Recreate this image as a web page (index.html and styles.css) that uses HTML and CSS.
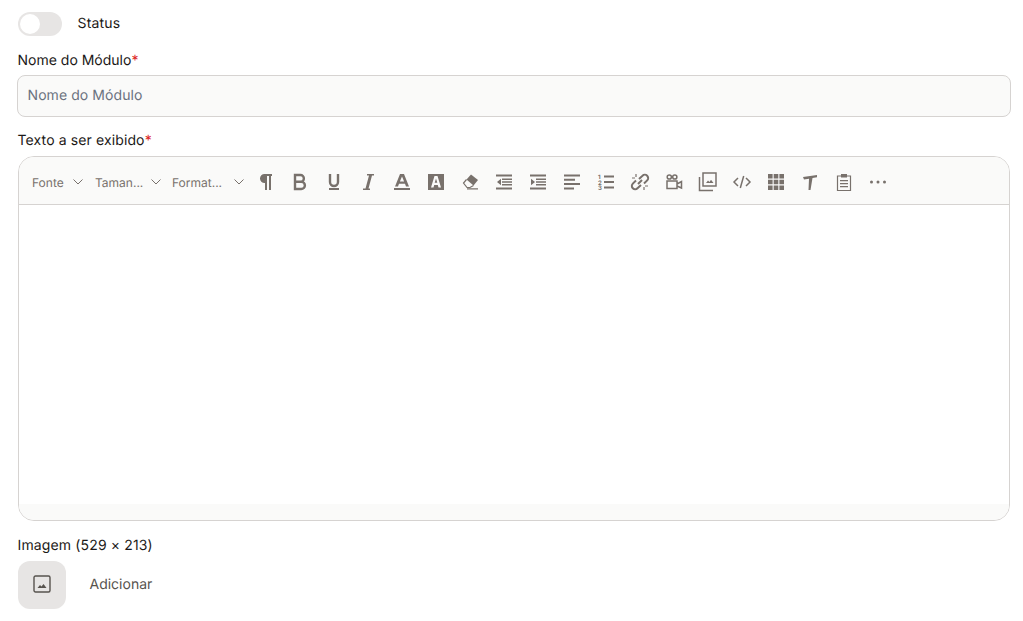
FILE: index.html
```html
<!DOCTYPE html>
<html>
<head>
	<meta charset="utf-8">
	<title>Módulo</title>
	<link rel="stylesheet" href="styles.css">
</head>
<body>
	<form class="form">
		<div class="status">
			<span class="toggle"><span class="knob"></span></span>
			<span class="status-text">Status</span>
		</div>

		<label class="label label-name">Nome do Módulo<span class="req">*</span></label>
		<div class="input"><span class="placeholder">Nome do Módulo</span></div>

		<label class="label label-text">Texto a ser exibido<span class="req">*</span></label>
		<div class="editor">
			<div class="toolbar">
				<div class="select sel-font"><span>Fonte</span><svg class="chev" viewBox="0 0 10 6"><path d="M.5.5 5 5 9.500.5"/></svg></div>
				<div class="select sel-size"><span>Taman...</span><svg class="chev" viewBox="0 0 10 6"><path d="M.5.5 5 5 9.500.5"/></svg></div>
				<div class="select sel-format"><span>Format...</span><svg class="chev" viewBox="0 0 10 6"><path d="M.5.5 5 5 9.500.5"/></svg></div>

				<!-- paragraph -->
				<span class="tool"><svg viewBox="0 0 20 20"><path class="fill" d="M16 2H8.500a4.500 4.500 0 0 0 0 9H9v7h2V4h2v14h2V4h1z"/></svg></span>
				<!-- bold -->
				<span class="tool"><svg viewBox="0 0 20 20"><path class="line heavy" d="M5 3h5.500a3.400 3.400 0 0 1 0 6.800H5zM5 9.800h6.300a3.600 3.600 0 0 1 0 7.200H5z"/></svg></span>
				<!-- underline -->
				<span class="tool"><svg viewBox="0 0 20 20"><path class="line heavy" d="M6 2v8a4 4 0 0 0 8 0V2"/><path class="fill" d="M5 16h10v2H5z"/></svg></span>
				<!-- italic -->
				<span class="tool"><svg viewBox="0 0 20 20"><path class="fill" d="M9 2h7v1.500h-2L10.500 16.500H12V18H5v-1.500h2.500L11 3.500H9z"/></svg></span>
				<!-- font color -->
				<span class="tool"><svg viewBox="0 0 20 20"><path class="fill" d="M8 2h4l5 12.500h-3l-1-2.700H7l-1 2.700H3zM7.900 9.400h4.200L10 4.500zM2 16h16v2H2z"/></svg></span>
				<!-- highlight color -->
				<span class="tool"><svg viewBox="0 0 20 20"><path class="fill" fill-rule="evenodd" d="M2 2h16v16H2zM8.500 4 5 15.500h2.500l.7-2.500h3.600l.7 2.500H15L11.500 4zM8.700 10.800 10 6.500l1.300 4.300z"/></svg></span>
				<!-- eraser -->
				<span class="tool"><svg viewBox="0 0 20 20"><path class="fill" d="M11 2.500 18 8l-4.500 5.500L6.500 7.500z"/><path class="thin" d="M6.500 7.500 3.500 11l3.500 4.500h3l3.500-2M7 16.900h11"/></svg></span>
				<!-- outdent -->
				<span class="tool"><svg viewBox="0 0 20 20"><path class="fill" d="M2 2.500h16v2H2zM2 15.500h16v2H2zM8 6.500h10v1.400H8zM8 9.300h10v1.400H8zM8 12.100h10v1.400H8zM7 6.800v6.400L3 10z"/></svg></span>
				<!-- indent -->
				<span class="tool"><svg viewBox="0 0 20 20"><path class="fill" d="M2 2.500h16v2H2zM2 15.500h16v2H2zM8 6.500h10v1.400H8zM8 9.300h10v1.400H8zM8 12.100h10v1.400H8zM3 6.800v6.400L7 10z"/></svg></span>
				<!-- align -->
				<span class="tool"><svg viewBox="0 0 20 20"><path class="fill" d="M2 2.500h16v2H2zM2 6.800h11v2H2zM2 11.100h16v2H2zM2 15.400h10v2H2z"/></svg></span>
				<!-- ordered list -->
				<span class="tool"><svg viewBox="0 0 20 20"><text class="num" x="2" y="7">1</text><text class="num" x="2" y="12.500">2</text><text class="num" x="2" y="18">3</text><path class="fill" d="M8 3.500h10v2H8zM8 9h10v2H8zM8 14.500h10v2H8z"/></svg></span>
				<!-- link -->
				<span class="tool"><svg viewBox="0 0 20 20"><path class="line" d="M9 7 12.500 3.700a3.300 3.300 0 0 1 4.700 4.700L14 11.500M11 13 7.500 16.300a3.300 3.300 0 0 1-4.700-4.700L6 8.500M8 12l4-4"/><path class="thin" d="M6 2v3M2 6h3M18 14h-3M14 18v-3"/></svg></span>
				<!-- video -->
				<span class="tool"><svg viewBox="0 0 20 20"><circle class="thin2" cx="5.300" cy="5" r="2.100"/><circle class="thin2" cx="10.800" cy="5" r="2.100"/><path class="thin2" d="M3 9h10v7.500H3zM13 12l4.500-2.500v6.500L13 14"/></svg></span>
				<!-- image -->
				<span class="tool"><svg viewBox="0 0 20 20"><path class="thin2" d="M5 1h13v13H5z"/><path class="thin2" d="M1.500 5v13.500H15"/><path class="fill" d="M8 11l2-2.500 1.500 1.500L13 7.800 15.500 11z"/></svg></span>
				<!-- code -->
				<span class="tool"><svg viewBox="0 0 20 20"><path class="thin2" d="M6 6l-4 4 4 4M14 6l4 4-4 4M11.700 4 8.300 16"/></svg></span>
				<!-- table -->
				<span class="tool"><svg viewBox="0 0 20 20"><path class="fill" d="M2 2h4.600v4.600H2zM7.700 2h4.600v4.600H7.700zM13.400 2H18v4.600h-4.600zM2 7.700h4.600v4.600H2zM7.700 7.700h4.600v4.600H7.700zM13.400 7.700H18v4.600h-4.600zM2 13.400h4.600V18H2zM7.700 13.400h4.600V18H7.700zM13.400 13.400H18V18h-4.600z"/></svg></span>
				<!-- clear style -->
				<span class="tool"><svg viewBox="0 0 20 20"><path class="fill" d="M3 5 17 3v2.200L12.500 6 10.500 18H8.500L9 6.800 4 7.500z"/></svg></span>
				<!-- clipboard -->
				<span class="tool"><svg viewBox="0 0 20 20"><path class="thin" d="M7 4H3.500v14.500h13V4H13"/><path class="fill" d="M7 2h6v3.500H7zM6 8h8v1.200H6zM6 11h8v1.200H6zM6 14h8v1.200H6z"/></svg></span>
				<!-- more -->
				<span class="tool"><svg viewBox="0 0 20 20"><circle class="fill" cx="3.500" cy="10" r="1.500"/><circle class="fill" cx="10" cy="10" r="1.500"/><circle class="fill" cx="16.500" cy="10" r="1.500"/></svg></span>
			</div>
			<div class="editable"></div>
			<div class="statusbar"></div>
		</div>

		<label class="label label-image">Imagem (529 × 213)</label>
		<div class="upload">
			<span class="thumb">
				<svg viewBox="0 0 18 18"><rect x="1" y="1" width="16" height="16" rx="1.500"/><path d="M4.500 13 7 10l1.500 1.500L10.500 9l3 4z"/></svg>
			</span>
			<span class="upload-text">Adicionar</span>
		</div>
	</form>
</body>
</html>
```

FILE: styles.css
```css
*{
	box-sizing: border-box;
}

body{
	margin: 0;
	background: #fff;
	color: #1c1917;
	font-family: Inter, "Liberation Sans", sans-serif;
	font-size: 14px;
	letter-spacing: .08px;
	text-rendering: geometricPrecision;
}

.form{
	display: flex;
	flex-direction: column;
	padding: 12px 12px 0 17px;
}

.status{
	display: flex;
	align-items: center;
	gap: 15.5px;
	height: 24px;
	margin-left: 1px;
}

.status-text{
	margin-top: -2px;
	letter-spacing: .2px;
}

.toggle{
	display: block;
	width: 44px;
	height: 24px;
	padding: 2px;
	border-radius: 12px;
	background: #e7e5e4;
}

.knob{
	display: block;
	width: 20px;
	height: 20px;
	border-radius: 50%;
	background: #fff;
}

.label{
	display: block;
	height: 20px;
	padding-left: .5px;
	line-height: 22px;
}

.label-name{
	margin-top: 14px;
	margin-bottom: 5px;
	letter-spacing: 0;
}

.label-text{
	margin-top: 13px;
	margin-bottom: 6px;
	letter-spacing: .12px;
}

.label-image{
	margin-top: 14px;
	margin-bottom: 6px;
	letter-spacing: .14px;
}

.req{
	color: #dc2626;
}

.input{
	display: flex;
	align-items: center;
	height: 42px;
	padding: 0 9.5px 2px;
	border: 1px solid #d6d3d1;
	border-radius: 8px;
	background: #fafaf9;
}

.placeholder{
	color: #6b7280;
}

.editor{
	display: flex;
	flex-direction: column;
	height: 365px;
	margin: 0 1px;
	border: 1px solid #d6d3d1;
	border-radius: 16px;
	overflow: hidden;
}

.toolbar{
	display: flex;
	align-items: center;
	height: 48px;
	padding-top: 2px;
	border-bottom: 1px solid #d6d3d1;
	background: #fafaf9;
}

.select{
	display: flex;
	align-items: center;
	justify-content: space-between;
	height: 100%;
	padding-left: 13px;
	color: #78716c;
	font-size: 12px;
	letter-spacing: 0;
}

.select span{
	padding-top: 2px;
}

.sel-font{
	width: 63px;
}

.sel-size{
	width: 78px;
}

.sel-format{
	width: 89px;
	padding-left: 12px;
	padding-right: 6px;
}

.chev{
	flex: none;
	width: 10px;
	height: 6px;
	margin-right: -1px;
	fill: none;
	stroke: #78716c;
	stroke-width: 1;
}

.tool{
	display: flex;
	flex: none;
	align-items: center;
	justify-content: center;
	width: 34px;
	height: 100%;
}

.tool svg{
	width: 20px;
	height: 20px;
}

.fill{
	fill: #78716c;
}

.line{
	fill: none;
	stroke: #78716c;
	stroke-width: 2;
}

.heavy{
	stroke-width: 2.4;
}

.thin{
	fill: none;
	stroke: #78716c;
	stroke-width: 1.2;
}

.thin2{
	fill: none;
	stroke: #78716c;
	stroke-width: 1.5;
}

.num{
	fill: #78716c;
	font-family: Inter, sans-serif;
	font-size: 6px;
	font-weight: 700;
}

.editable{
	flex: 1;
	background: #fff;
}

.statusbar{
	height: 16px;
	background: #fafaf9;
}

.upload{
	display: flex;
	align-items: center;
	gap: 23.5px;
	margin-left: 1px;
}

.thumb{
	display: flex;
	align-items: center;
	justify-content: center;
	width: 48px;
	height: 48px;
	border-radius: 12px;
	background: #e7e5e4;
}

.thumb svg{
	width: 18px;
	height: 18px;
	margin-top: -2px;
	margin-left: -1px;
}

.thumb rect{
	fill: none;
	stroke: #57534e;
	stroke-width: 1.4;
}

.thumb path{
	fill: #57534e;
}

.upload-text{
	margin-top: -2px;
	color: #57534e;
	letter-spacing: 0;
}
```
